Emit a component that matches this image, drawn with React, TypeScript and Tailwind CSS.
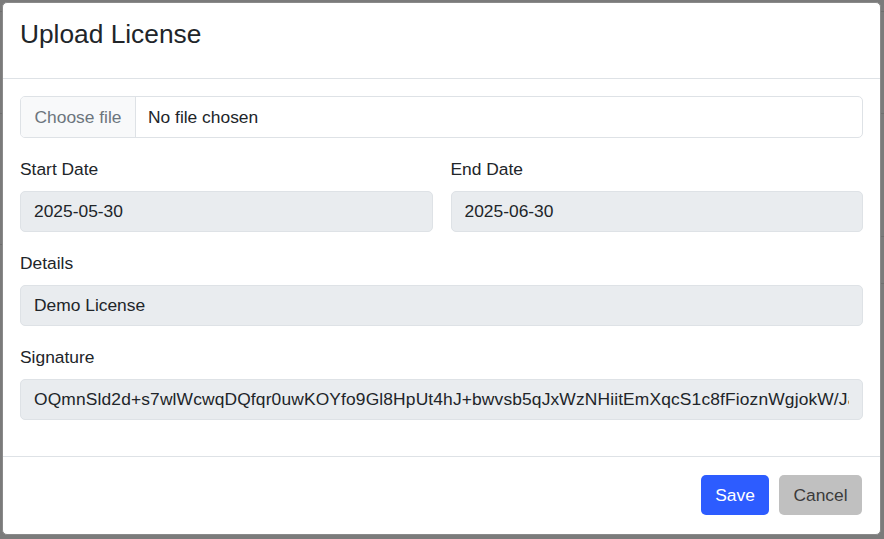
import React from "react";

const SIGNATURE =
  "OQmnSld2d+s7wlWcwqDQfqr0uwKOYfo9Gl8HpUt4hJ+bwvsb5qJxWzNHiitEmXqcS1c8fFioznWgjokW/JaQ3rT8vLp0XnE2mYk7sDfH4uGc9Rb1wZ==";

function Field({
  label,
  value,
  wide,
}: {
  label: string;
  value: string;
  wide?: boolean;
}) {
  return (
    <div className="mb-[19px] flex flex-col">
      <label className="mb-[10px] h-[24px] leading-[24px]">{label}</label>
      <input
        readOnly
        value={value}
        className={
          wide
            ? "h-[41px] w-full rounded-[5px] border border-[#dee2e6] bg-[#e9ecef] px-[13px] text-[17.4px] tracking-[0.14px] text-[#212529] outline-none"
            : "h-[41px] w-full rounded-[5px] border border-[#dee2e6] bg-[#e9ecef] px-[13px] text-[17.4px] text-[#212529] outline-none"
        }
        style={{ fontFamily: "'Liberation Sans', Arial, sans-serif" }}
      />
    </div>
  );
}

export default function App() {
  return (
    <div
      className="relative h-[539px] w-[884px] overflow-hidden bg-[#7b7b7b] text-[17.4px] text-[#212529]"
      style={{ fontFamily: "'Liberation Sans', Arial, sans-serif" }}
    >
      {/* dimmed page underneath the backdrop */}
      <div className="absolute left-0 top-[11px] h-px w-full bg-[#6e6e6e]" />
      <div className="absolute left-0 top-[113px] h-px w-full bg-[#6e6e6e]" />
      <div className="absolute left-0 top-[244px] h-px w-[10px] bg-[#6e6e6e]" />
      <div className="absolute right-0 top-[236px] h-px w-[10px] bg-[#6e6e6e]" />
      <div className="absolute right-0 top-[283px] h-px w-[10px] bg-[#6e6e6e]" />

      <div className="relative pl-[2px] pt-[2px]">
        <div className="flex h-[533px] w-[879px] flex-col rounded-[5px] border border-[#8a8a8a] bg-white">
          {/* header */}
          <div className="h-[76px] shrink-0 border-b border-[#dee2e6] px-[17px] pt-[16px]">
            <h5 className="text-[26.3px] leading-[1.2] text-[#212529]">Upload License</h5>
          </div>

          {/* body */}
          <div className="flex-1 px-[17px] pt-[17px]">
            <div className="mb-[19px] flex h-[42px] overflow-hidden rounded-[5px] border border-[#dee2e6]">
              <div className="flex w-[115px] items-center justify-center border-r border-[#dee2e6] bg-[#f8f9fa] text-[#6c757d]">
                Choose file
              </div>
              <div className="flex items-center pl-[12px]">No file chosen</div>
            </div>

            <div className="grid grid-cols-2 gap-x-[18px]">
              <Field label="Start Date" value="2025-05-30" />
              <Field label="End Date" value="2025-06-30" />
            </div>
            <Field label="Details" value="Demo License" />
            <Field label="Signature" value={SIGNATURE} wide />
          </div>

          {/* footer */}
          <div className="flex h-[78px] shrink-0 items-start justify-end gap-[10px] border-t border-[#dee2e6] px-[18px] pt-[18px]">
            <button className="h-[40px] w-[68px] rounded-[5px] bg-[#2d5cff] text-[17.4px] text-white">
              Save
            </button>
            <button className="h-[40px] w-[83px] rounded-[5px] bg-[#c0c0c0] text-[17.4px] text-[#3b3b3b]">
              Cancel
            </button>
          </div>
        </div>
      </div>
    </div>
  );
}
